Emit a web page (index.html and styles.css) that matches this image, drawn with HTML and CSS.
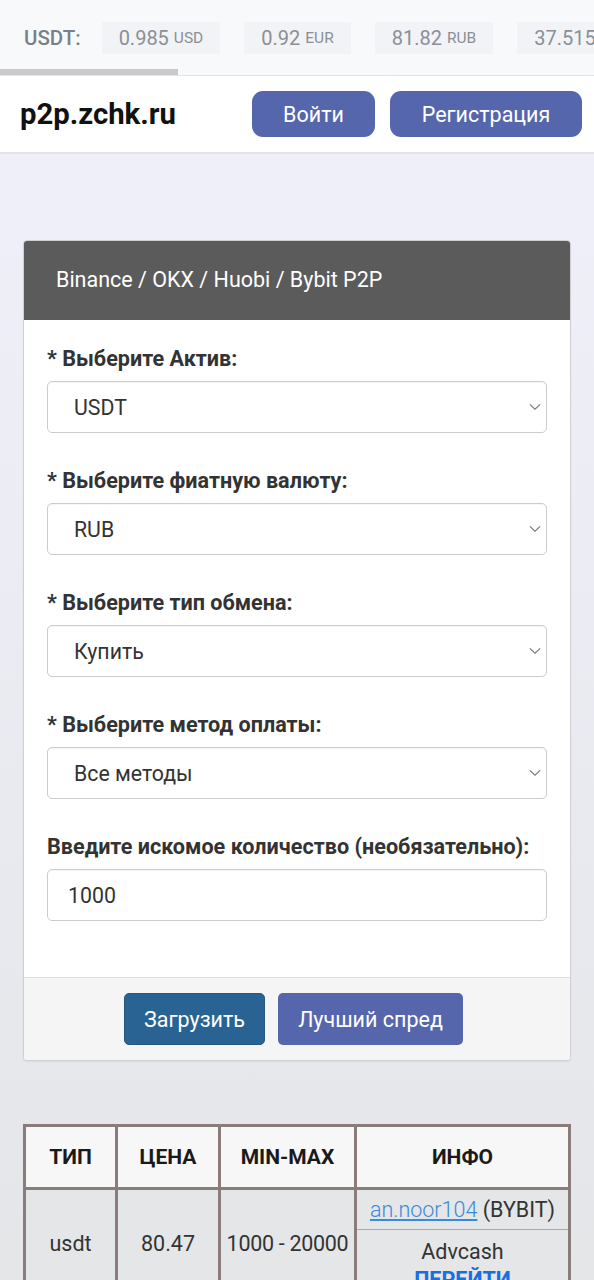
FILE: index.html
```html
<!DOCTYPE html>
<html lang="ru">
<head>
<meta charset="utf-8">
<title>p2p.zchk.ru</title>
<link rel="stylesheet" href="styles.css">
</head>
<body>
<div class="ticker">
  <div class="ticker-row">
    <span class="ticker-label">USDT:</span>
    <span class="chip">0.985 <small>USD</small></span>
    <span class="chip">0.92 <small>EUR</small></span>
    <span class="chip">81.82 <small>RUB</small></span>
    <span class="chip">37.515 <small>UAH</small></span>
  </div>
  <div class="scrollbar"><div class="thumb"></div></div>
</div>
<header class="topbar">
  <div class="logo">p2p.zchk.ru</div>
  <div class="auth">
    <a class="btn btn-purple btn-login">Войти</a>
    <a class="btn btn-purple btn-reg">Регистрация</a>
  </div>
</header>
<main class="main">
  <section class="card">
    <div class="card-head">Binance / OKX / Huobi / Bybit P2P</div>
    <div class="card-body">
      <div class="field">
        <label class="lbl">* Выберите Актив:</label>
        <div class="select-wrap"><div class="select">USDT</div><svg class="chev" viewBox="0 0 14 8"><path d="M1 1l6 5.5L13 1" fill="none" stroke="#777" stroke-width="1.3"/></svg></div>
      </div>
      <div class="field">
        <label class="lbl">* Выберите фиатную валюту:</label>
        <div class="select-wrap"><div class="select">RUB</div><svg class="chev" viewBox="0 0 14 8"><path d="M1 1l6 5.5L13 1" fill="none" stroke="#777" stroke-width="1.3"/></svg></div>
      </div>
      <div class="field">
        <label class="lbl">* Выберите тип обмена:</label>
        <div class="select-wrap"><div class="select">Купить</div><svg class="chev" viewBox="0 0 14 8"><path d="M1 1l6 5.5L13 1" fill="none" stroke="#777" stroke-width="1.3"/></svg></div>
      </div>
      <div class="field">
        <label class="lbl">* Выберите метод оплаты:</label>
        <div class="select-wrap"><div class="select">Все методы</div><svg class="chev" viewBox="0 0 14 8"><path d="M1 1l6 5.5L13 1" fill="none" stroke="#777" stroke-width="1.3"/></svg></div>
      </div>
      <div class="field">
        <label class="lbl">Введите искомое количество (необязательно):</label>
        <div class="input">1000</div>
      </div>
    </div>
    <div class="card-foot">
      <a class="btn btn-blue">Загрузить</a>
      <a class="btn btn-purple btn-spread">Лучший спред</a>
    </div>
  </section>

  <table class="offers">
    <thead>
      <tr><th class="c1">ТИП</th><th class="c2">ЦЕНА</th><th class="c3">MIN-MAX</th><th class="c4">ИНФО</th></tr>
    </thead>
    <tbody>
      <tr>
        <td>usdt</td>
        <td>80.47</td>
        <td class="range">1000 - 20000</td>
        <td class="info">
          <div class="info-top"><span><a class="nick">an.noor104</a> (BYBIT)</span></div>
          <div class="info-bot">Advcash<br><a class="go">ПЕРЕЙТИ</a></div>
        </td>
      </tr>
    </tbody>
  </table>
</main>
</body>
</html>
```

FILE: styles.css
```css
* { box-sizing: border-box; }
html, body { margin: 0; padding: 0; }
body {
  font-family: Roboto, "Liberation Sans", Arial, sans-serif;
  color: #333;
  background: linear-gradient(180deg, #f0f0fa 0px, #efeff9 200px, #e9eaf0 800px, #e4e6e8 1280px);
  min-height: 1280px;
  width: 594px;
  overflow: hidden;
}
.ticker {
  background: #f8f9fb;
  height: 76px;
  border-bottom: 1px solid #e4e4e6;
  display: flex;
  flex-direction: column;
  overflow: hidden;
}
.ticker-row {
  display: flex;
  align-items: center;
  gap: 24px;
  padding: 7px 0 0 24px;
  height: 69px;
  white-space: nowrap;
}
.ticker-label {
  font-weight: 500;
  font-size: 20.5px;
  color: #7a8088;
  margin-right: -3px;
}
.chip {
  background: #f2f3f6;
  height: 32px;
  display: inline-flex;
  align-items: center;
  padding: 0 17px;
  font-size: 20px;
  color: #8a8f96;
  flex-shrink: 0;
}
.chip small { font-size: 15.5px; margin-left: 5px; }
.scrollbar { height: 6px; }
.thumb { width: 178px; height: 6px; background: #c9c9cb; }

.topbar {
  background: #fff;
  height: 78px;
  border-bottom: 2px solid #e4e4e8;
  display: flex;
  align-items: center;
  justify-content: space-between;
  padding: 0 12px 0 20px;
}
.logo { font-size: 29.3px; font-weight: 700; color: #111; }
.auth { display: flex; gap: 15px; }
.btn {
  display: inline-flex;
  align-items: center;
  justify-content: center;
  color: #fff;
  font-size: 21.5px;
  border-radius: 5px;
  height: 52px;
}
.btn-purple { background: #5566ad; }
.btn-blue { background: #296393; border: 1px solid #245880; }
.btn-login { width: 123px; height: 46px; border-radius: 11px; }
.btn-reg { width: 192px; height: 46px; border-radius: 11px; }

.main { padding: 86px 23px 0; }
.card {
  background: #fff;
  border: 1px solid #cfcfd4;
  border-radius: 4px;
  overflow: hidden;
  box-shadow: 0 1px 2px rgba(0,0,0,0.06);
}
.card-head {
  background: #5b5b5b;
  color: #fff;
  height: 79px;
  display: flex;
  align-items: center;
  padding-left: 32px;
  font-size: 21.5px;
  padding-bottom: 2px;
}
.card-body {
  padding: 26px 23px 56px 23px;
  display: flex;
  flex-direction: column;
  gap: 35px;
}
.field { display: flex; flex-direction: column; gap: 10px; }
.lbl { font-size: 21.6px; font-weight: 700; color: #333; line-height: 25px; }
.select-wrap { position: relative; }
.select, .input {
  height: 52px;
  border: 1px solid #ccc;
  border-radius: 5px;
  display: flex;
  align-items: center;
  font-size: 21.3px;
  color: #333;
  box-shadow: inset 0 1px 1px rgba(0,0,0,0.04);
}
.select { padding-left: 26px; }
.input { padding-left: 20px; }
.chev {
  position: absolute;
  right: 6px;
  top: 22px;
  width: 12px;
  height: 8px;
}
.card-foot {
  background: #f5f5f5;
  border-top: 1px solid #ddd;
  padding: 15px 7px 15px 0;
  display: flex;
  justify-content: center;
  gap: 13px;
}
.card-foot .btn-blue { width: 141px; }
.btn-spread { width: 185px; }

.offers {
  margin-top: 63px;
  width: 548px;
  border-collapse: collapse;
  border: 3px solid #8a7c7a;
  font-size: 21.5px;
  color: #333;
}
.offers th, .offers td {
  border: 3px solid #8a7c7a;
  text-align: center;
  padding: 0;
}
.offers th {
  background: #f7f7f7;
  color: #1a1a1a;
  font-weight: 700;
  height: 63px;
  font-size: 21px;
}
.c1 { width: 92px; }
.c2 { width: 103px; }
.c3 { width: 136px; }
.offers td { background: #e4e6e7; height: 110px; }
.offers td.range { letter-spacing: -0.3px; white-space: nowrap; }
.offers td.info { vertical-align: top; }
.info-top {
  height: 40px;
  border-bottom: 1px solid #aaa;
  display: flex;
  align-items: center;
  justify-content: center;
  white-space: nowrap;
}
.nick { color: #3b8ad9; text-decoration: underline; font-weight: 300; }
.info-bot { padding-top: 8px; line-height: 28px; }
.go { color: #1a6ee0; font-weight: 700; }
```
